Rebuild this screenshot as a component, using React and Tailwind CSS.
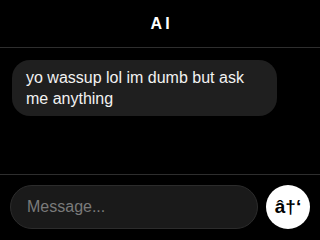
import React from 'react'

export default function App() {
  const messages = [
    { id: 1, from: 'ai', text: 'yo wassup lol im dumb but ask me anything' },
  ]

  return (
    <div
      className="flex h-screen w-full flex-col bg-black text-white"
      style={{ fontFamily: '"Liberation Sans", Arial, sans-serif' }}
    >
      {/* Header */}
      <div className="flex h-12 shrink-0 items-center justify-center border-b border-[#2e2e2e]">
        <h1 className="text-[16px] font-bold tracking-[0.2em] pl-[0.2em]">AI</h1>
      </div>

      {/* Messages */}
      <div className="flex flex-1 flex-col gap-2 overflow-hidden px-3 pt-3">
        {messages.map((m) => (
          <div
            key={m.id}
            className="max-w-[265px] rounded-[18px] bg-[#1f1f1f] px-[14px] py-[7px] text-[16px] leading-[21px] text-[#f2f2f2]"
          >
            {m.text}
          </div>
        ))}
      </div>

      {/* Input */}
      <div className="flex shrink-0 items-center gap-2 border-t border-[#2e2e2e] px-[10px] pt-[10px] pb-[11px]">
        <input
          type="text"
          placeholder="Message..."
          className="h-11 min-w-0 flex-1 rounded-[22px] border border-[#2c2c2c] bg-[#1a1a1a] px-4 text-[16px] text-white placeholder:text-[#7a7a7a] outline-none"
        />
        <button className="flex h-11 w-11 shrink-0 items-center justify-center rounded-full bg-white text-[19px] font-bold text-black">
          â†‘
        </button>
      </div>
    </div>
  )
}
